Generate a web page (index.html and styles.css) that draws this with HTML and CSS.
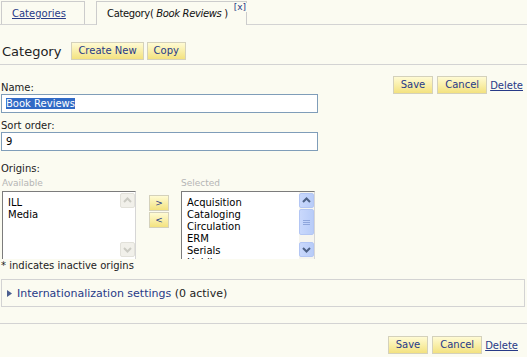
FILE: index.html
```html
<!DOCTYPE html>
<html lang="en">
<head>
    <meta charset="UTF-8">
    <title>Category - Book Reviews</title>
    <link rel="stylesheet" href="styles.css">
</head>
<body>
    <div class="tabbar">
        <a href="#" class="tab">Categories</a>
        <div class="tab active"><span class="tab-title">Category( <i>Book Reviews</i> )</span><a href="#" class="tab-close">[x]</a></div>
    </div>

    <div class="titlebar">
        <h1>Category</h1>
        <button class="btn">Create New</button>
        <button class="btn">Copy</button>
    </div>

    <div class="editor">
        <div class="fields">
            <label class="label">Name:</label>
            <div class="field"><span class="selected">Book Reviews</span></div>

            <label class="label">Sort order:</label>
            <div class="field">9</div>

            <label class="label origins-label">Origins:</label>
            <div class="origins">
                <div class="picker picker-available">
                    <div class="picker-label">Available</div>
                    <div class="listbox">
                        <ul>
                            <li>ILL</li>
                            <li>Media</li>
                        </ul>
                        <div class="scrollbar disabled">
                            <span class="sb-btn"><svg width="13" height="13" viewBox="0 0 13 13"><path d="M3 8 L6.5 4.5 L10 8" fill="none" stroke="currentColor" stroke-width="2"/></svg></span>
                            <span class="sb-btn"><svg width="13" height="13" viewBox="0 0 13 13"><path d="M3 5 L6.5 8.5 L10 5" fill="none" stroke="currentColor" stroke-width="2"/></svg></span>
                        </div>
                    </div>
                </div>

                <div class="movers">
                    <button class="btn mover">&gt;</button>
                    <button class="btn mover">&lt;</button>
                </div>

                <div class="picker picker-selected">
                    <div class="picker-label">Selected</div>
                    <div class="listbox">
                        <ul>
                            <li>Acquisition</li>
                            <li>Cataloging</li>
                            <li>Circulation</li>
                            <li>ERM</li>
                            <li>Serials</li>
                            <li>Holdings</li>
                        </ul>
                        <div class="scrollbar">
                            <span class="sb-btn"><svg width="13" height="13" viewBox="0 0 13 13"><path d="M3 8 L6.5 4.5 L10 8" fill="none" stroke="currentColor" stroke-width="2"/></svg></span>
                            <span class="sb-thumb"><svg width="7" height="7" viewBox="0 0 7 7"><path d="M0 1.5 H7 M0 3.5 H7 M0 5.5 H7" stroke="currentColor" stroke-width="1"/></svg></span>
                            <span class="sb-gap"></span>
                            <span class="sb-btn"><svg width="13" height="13" viewBox="0 0 13 13"><path d="M3 5 L6.5 8.5 L10 5" fill="none" stroke="currentColor" stroke-width="2"/></svg></span>
                        </div>
                    </div>
                </div>
            </div>
            <p class="note">* indicates inactive origins</p>
        </div>

        <div class="actions">
            <button class="btn btn-wide">Save</button>
            <button class="btn btn-wide">Cancel</button>
            <a href="#" class="link">Delete</a>
        </div>
    </div>

    <div class="i18n">
        <svg class="i18n-arrow" width="5" height="7" viewBox="0 0 5 7"><path d="M0 0 L5 3.5 L0 7 Z" fill="currentColor"/></svg>
        <a href="#" class="i18n-link">Internationalization settings</a>&nbsp;(0 active)
    </div>

    <div class="footer">
        <div class="actions">
            <button class="btn btn-wide">Save</button>
            <button class="btn btn-wide">Cancel</button>
            <a href="#" class="link">Delete</a>
        </div>
    </div>
</body>
</html>
```

FILE: styles.css
```css
:root {
    --bg-color: #fbfbf1;
    --link-color: #273a87;
    --line-color: #d3d3d3;
    --tab-border: #cccccc;
}

* {
    box-sizing: border-box;
}

body {
    margin: 0;
    background-color: var(--bg-color);
    color: #222222;
    font-family: "DejaVu Sans", Verdana, sans-serif;
    font-size: 10px;
}

a {
    color: var(--link-color);
}

/* tabs */
.tabbar {
    display: flex;
    align-items: flex-end;
    gap: 11px;
    height: 25px;
    padding-left: 1px;
    border-bottom: 1px solid var(--line-color);
}

.tab {
    height: 23px;
    line-height: 24px;
    padding-left: 10px;
    border: 1px solid var(--tab-border);
    border-bottom: none;
    font-size: 10px;
}

a.tab {
    width: 84px;
}

.tab.active {
    position: relative;
    width: 151px;
    height: 24px;
    margin-bottom: -1px;
    background-color: var(--bg-color);
    color: #111111;
    white-space: nowrap;
}

.tab-title {
    letter-spacing: -0.35px;
}

.tab-close {
    position: absolute;
    top: 1px;
    right: -1px;
    padding: 0 1px;
    background-color: var(--bg-color);
    font-size: 9px;
    line-height: 9px;
    letter-spacing: 0;
    text-decoration: none;
}

/* title row */
.titlebar {
    display: flex;
    align-items: center;
    gap: 3px;
    margin-top: 17px;
    padding: 0 0 4px 2px;
    border-bottom: 1px solid var(--line-color);
}

.titlebar h1 {
    margin: 0 7px 0 0;
    font-size: 13px;
    font-weight: normal;
    color: #222222;
}

.btn {
    height: 18px;
    padding: 0 6px;
    border: 1px solid #d4d1bb;
    background: linear-gradient(#fffbd4, #f3e27f);
    color: var(--link-color);
    font-family: inherit;
    font-size: 10px;
    line-height: 16px;
    cursor: pointer;
}

.btn-wide {
    padding: 0 7px;
}

/* editor */
.editor {
    display: flex;
    justify-content: space-between;
    padding: 0 4px 0 1px;
}

.fields {
    width: 317px;
    padding-top: 16px;
}

.label {
    display: block;
    line-height: 13px;
}

.field {
    height: 19px;
    margin-bottom: 6px;
    padding: 0 4px;
    border: 1px solid #7f9db9;
    background-color: #ffffff;
    line-height: 17px;
    color: #000000;
}

.selected {
    background-color: #316ac5;
    color: #ffffff;
}

.origins-label {
    margin-top: 11px;
    margin-bottom: 3px;
}

.origins {
    display: flex;
    padding-left: 1px;
}

.picker-label {
    margin-bottom: 2px;
    font-size: 9px;
    line-height: 11px;
    color: #b5b5b5;
}

.picker-available {
    width: 134px;
}

.picker-selected {
    width: 134px;
}

.listbox {
    display: flex;
    height: 68px;
    overflow: hidden;
    border-top: 1px solid #7c7c7c;
    border-left: 1px solid #7c7c7c;
    border-right: 1px solid #d6d6d6;
    background-color: #ffffff;
}

.listbox ul {
    flex: 1;
    margin: 0;
    padding: 5px 0 0 5px;
    list-style: none;
    line-height: 12px;
    color: #000000;
}

.scrollbar {
    display: flex;
    flex-direction: column;
    justify-content: space-between;
    width: 15px;
    padding: 1px 0 2px;
    background-color: #f6f5ef;
}

.sb-btn,
.sb-thumb {
    display: flex;
    align-items: center;
    justify-content: center;
    height: 15px;
    border: 1px solid #b3c6f4;
    border-radius: 2px;
    background: linear-gradient(90deg, #c9d8fc, #b8ccf8);
    color: #4d6185;
}

.sb-thumb {
    height: 26px;
    margin-top: 1px;
    color: #8fa6dc;
}

.sb-gap {
    flex: 1;
}

.scrollbar.disabled {
    background-color: #ffffff;
}

.scrollbar.disabled .sb-btn {
    border-color: #e2e1da;
    background: #f1f0ea;
    color: #cbcbc3;
}

.movers {
    display: flex;
    flex-direction: column;
    gap: 1px;
    margin: 17px 12px 0 13px;
}

.mover {
    width: 20px;
    height: 16px;
    padding: 0;
    font-size: 9px;
    line-height: 13px;
}

.note {
    margin: 0;
    line-height: 13px;
}

.actions {
    display: flex;
    align-items: center;
    gap: 4px;
    margin-top: 11px;
    height: 18px;
}

.link {
    margin-left: -1px;
}

/* i18n */
.i18n {
    display: flex;
    align-items: center;
    height: 28px;
    margin: 7px 2px 0 1px;
    padding-left: 5px;
    border: 1px solid var(--line-color);
    font-size: 11px;
    color: #222222;
}

.i18n-arrow {
    margin-right: 5px;
    color: #4b5e8f;
}

.i18n-link {
    text-decoration: none;
}

.footer {
    display: flex;
    justify-content: flex-end;
    margin-top: 16px;
    padding-right: 9px;
    border-top: 1px solid var(--line-color);
}

.footer .actions {
    margin-top: 12px;
}
```
